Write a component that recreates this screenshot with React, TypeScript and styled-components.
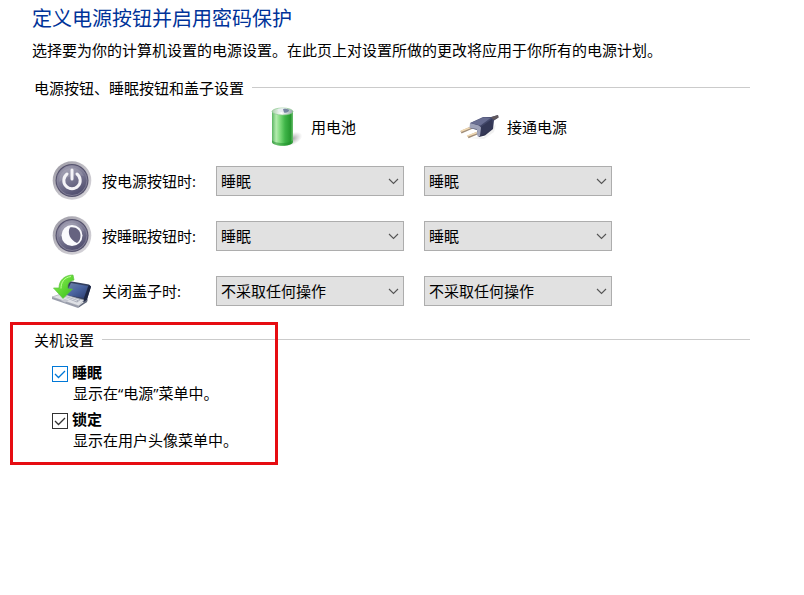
import React, { useState } from 'react';
import styled, { createGlobalStyle } from 'styled-components';

const GlobalStyle = createGlobalStyle`
  *, *::before, *::after { box-sizing: border-box; }
  body {
    margin: 0;
    background: #fff;
    color: #000;
    font: 15px/20px "Open Sans", "Noto Sans CJK SC", sans-serif;
  }
  select, input { font: inherit; color: inherit; margin: 0; }
`;

const Page = styled.main`
  padding: 0 54px 40px 32px;
`;

const Title = styled.h1`
  margin: 0;
  font-size: 20px;
  line-height: 38px;
  font-weight: 400;
  color: #003399;
`;

const Intro = styled.p`
  margin: 2px 0 18px;
`;

const Section = styled.section`
  position: relative;
  margin-bottom: 19px;
  padding-left: 2px;
`;

const SectionTitle = styled.h2`
  display: flex;
  align-items: center;
  gap: 8px;
  margin: 0;
  font-size: 15px;
  line-height: 20px;
  font-weight: 400;

  &::after {
    content: '';
    flex: 1;
    height: 1px;
    margin-bottom: 2px;
    background: #cbcbcb;
  }
`;

const Settings = styled.div`
  display: grid;
  grid-template-columns: 144px repeat(2, minmax(0, 188px));
  column-gap: 20px;
  row-gap: 15px;
  align-items: center;
  margin: 10px 0 0 18px;
`;

const SourceHeading = styled.div<{ $column: number; $indent: number }>`
  grid-column-start: ${(p) => p.$column};
  display: flex;
  align-items: center;
  gap: 7px;
  height: 38px;
  padding-left: ${(p) => p.$indent}px;
  white-space: nowrap;
`;

const RowLabel = styled.div`
  display: flex;
  align-items: center;
  gap: 10px;
  height: 40px;
  white-space: nowrap;
`;

const Icon = styled.svg`
  flex: none;
  width: 40px;
  height: 40px;
`;

const SelectBox = styled.div`
  position: relative;
`;

const Select = styled.select`
  display: block;
  appearance: none;
  width: 100%;
  height: 30px;
  padding: 0 28px 0 4px;
  border: 1px solid #adadad;
  border-radius: 0;
  background: #e1e1e1;
`;

const Chevron = styled.svg`
  position: absolute;
  top: 12px;
  right: 5px;
  width: 11px;
  height: 7px;
  pointer-events: none;
`;

const Options = styled.div`
  display: grid;
  row-gap: 6px;
  margin: 12px 0 0 18px;
`;

const Option = styled.div`
  display: grid;
  grid-template-columns: 16px 1fr;
  column-gap: 4px;
  row-gap: 1px;
`;

const CheckMark = styled.span`
  display: grid;
  align-self: end;
  width: 16px;
  height: 16px;

  > * { grid-area: 1 / 1; }
  svg { pointer-events: none; }
`;

const CheckInput = styled.input<{ $active: boolean }>`
  appearance: none;
  width: 16px;
  height: 16px;
  border: 1px solid ${(p) => (p.$active ? '#0078d7' : '#333')};
  background: #fff;

  & + svg { color: ${(p) => (p.$active ? '#0078d7' : '#333')}; }
  &:not(:checked) + svg { visibility: hidden; }
`;

const OptionName = styled.label`
  font-weight: 700;
`;

const OptionHint = styled.p`
  grid-column: 2;
  margin: 0 0 0 1px;
`;

const Highlight = styled.div`
  position: absolute;
  top: -8px;
  left: -22px;
  width: 268px;
  height: 143px;
  border: 3px solid #e60c12;
  pointer-events: none;
`;

function BatteryIcon() {
  return (
    <Icon viewBox="0 0 40 40" aria-hidden="true">
      <defs>
        <linearGradient id="cell" x1="0" x2="1">
          <stop offset="0" stopColor="#5cb563" />
          <stop offset=".2" stopColor="#b4ecae" />
          <stop offset=".42" stopColor="#74d673" />
          <stop offset=".62" stopColor="#3fb548" />
          <stop offset=".88" stopColor="#26982f" />
          <stop offset="1" stopColor="#6cc070" />
        </linearGradient>
        <linearGradient id="cap" x1="0" x2="1">
          <stop offset="0" stopColor="#a9cfab" />
          <stop offset=".45" stopColor="#fff" />
          <stop offset="1" stopColor="#92a4a8" />
        </linearGradient>
        <radialGradient id="cellShade">
          <stop offset="0" stopColor="#777" stopOpacity=".7" />
          <stop offset="1" stopColor="#999" stopOpacity="0" />
        </radialGradient>
      </defs>
      <ellipse cx="28" cy="32" rx="11" ry="6" fill="url(#cellShade)" transform="rotate(-25 28 32)" />
      <path d="M8 4v31c1 5 20 5 21 0V4z" fill="url(#cell)" />
      <path d="M8 33c2 4 19 4 21 0v2c-1 5-20 5-21 0z" fill="#1f8e2b" opacity=".5" />
      <ellipse cx="18.500" cy="4.500" rx="10.500" ry="3.500" fill="url(#cap)" stroke="#8fca92" strokeWidth=".7" />
      <ellipse cx="19" cy="3.300" rx="5" ry="2" fill="#e9edf2" />
      <path d="M19 2.200c3-1 6 0 6 1.400s-3 2.600-5 1.900z" fill="#7586a0" />
    </Icon>
  );
}

function PlugIcon() {
  return (
    <Icon viewBox="0 0 40 40" aria-hidden="true">
      <defs>
        <linearGradient id="plug" x1="0" y1="0" x2=".5" y2="1">
          <stop offset="0" stopColor="#71769a" />
          <stop offset=".45" stopColor="#454a6c" />
          <stop offset="1" stopColor="#2b2e48" />
        </linearGradient>
      </defs>
      <path d="M8 31l16-1 12-13-2 8-10 7z" fill="#999" opacity=".15" />
      <path d="M13 20L1 25.300M20 25L8 30" stroke="#a08d78" strokeWidth="2.800" />
      <path d="M13 19.500L1 24.300M20 24.500L7 29.300" stroke="#f0d9b4" strokeWidth="1.600" />
      <path d="M10 16l13-6h8l7-2 .500 2.500-4.500 3-1 8.500-8 6.500-6 1.500-2-7-7-2z" fill="url(#plug)" />
      <path d="M10 16l9 2.500 2 2-1 8.500-2 1-1.500-4 1-1-1-3-7-1z" fill="#9da1b8" />
      <path d="M10.500 16l13-5.500 7 .5-10 7.500z" fill="#686d91" />
      <path d="M21 20l11-8 1 8-12 9z" fill="#343856" />
      <path d="M31 10.300l7-2.300.5 2.500-4.500 2.500z" fill="#62595d" />
    </Icon>
  );
}

function RoundButton({ id, children }: { id: string; children: React.ReactNode }) {
  return (
    <Icon viewBox="0 0 40 40" aria-hidden="true">
      <defs>
        <linearGradient id={`${id}Rim`} x1="0" y1="0" x2="1" y2="1">
          <stop offset="0" stopColor="#9896a1" />
          <stop offset=".5" stopColor="#c1bfc6" />
          <stop offset="1" stopColor="#dad8dd" />
        </linearGradient>
        <linearGradient id={`${id}Face`} x1=".2" y1="0" x2=".7" y2="1">
          <stop offset="0" stopColor="#a19fb2" />
          <stop offset=".5" stopColor="#777590" />
          <stop offset="1" stopColor="#4d4b6c" />
        </linearGradient>
      </defs>
      <circle cx="20" cy="19.500" r="19.300" fill={`url(#${id}Rim)`} />
      <circle cx="20" cy="19.500" r="16.500" fill="#57546f" />
      <circle cx="20" cy="19.500" r="15" fill={`url(#${id}Face)`} stroke="#8c899f" strokeWidth=".8" />
      <path d="M7 21a13 13 0 0 1 25-6c-8-2-17 0-25 6z" fill="#fff" opacity=".12" />
      {children}
    </Icon>
  );
}

function LaptopIcon() {
  return (
    <Icon viewBox="0 0 40 40" aria-hidden="true">
      <defs>
        <linearGradient id="screen" x1="0" y1="0" x2="1" y2="1">
          <stop offset="0" stopColor="#7486a6" />
          <stop offset=".5" stopColor="#4a64a0" />
          <stop offset="1" stopColor="#2a3c70" />
        </linearGradient>
        <linearGradient id="arrow" x1="0" y1="0" x2="1" y2="1">
          <stop offset="0" stopColor="#8df355" />
          <stop offset="1" stopColor="#37bd19" />
        </linearGradient>
      </defs>
      <path d="M9 25l8-15 20 3.500 2 2-5 16z" fill="#34405f" />
      <path d="M13 24l6-12 17 3-4 12z" fill="url(#screen)" />
      <path d="M37 14l2 1.500-5 16-3-2z" fill="#1c2543" />
      <path d="M0 26l9-3 23 6-5 6z" fill="#dfe1e6" stroke="#9c9fa9" strokeWidth=".6" />
      <path d="M0 26v2l26 9 1-2z" fill="#999dab" />
      <path d="M27 35l6-5 3-2-1 3-9 6z" fill="#626879" />
      <path d="M9 25l4-1.500 16 5-4 3z" fill="#a9adb9" />
      <path d="M11 25.500l14 4.500M13 24.500l14 4.500" stroke="#eef0f4" strokeWidth=".7" />
      <path d="M9 29.500l4-1.500 4 1.500-4 2z" fill="#c3c6cf" />
      <path d="M21 4C13 4 7 9 7 17H1.500L11 27.500 20.500 18H16c-1-5 1-8 6-9z" fill="url(#arrow)" stroke="#5cc340" strokeWidth=".7" />
      <path d="M19 5.500c-7 1-10 6-10 12" fill="none" stroke="#baff94" strokeWidth="1" />
    </Icon>
  );
}

const ACTIONS = ['不采取任何操作', '睡眠', '休眠', '关机'];

const ROWS = [
  {
    label: '按电源按钮时:',
    value: '睡眠',
    icon: (
      <RoundButton id="power">
        <path d="M15 13a8.200 8.200 0 1 0 10 0M20 9v9" fill="none" stroke="#f4f3f7" strokeWidth="3" strokeLinecap="round" />
      </RoundButton>
    ),
  },
  {
    label: '按睡眠按钮时:',
    value: '睡眠',
    icon: (
      <RoundButton id="sleep">
        <circle cx="20" cy="19.500" r="10.500" fill="#fafafd" />
        <path d="M18 11.500c6-1 10 2.500 10.500 7.500 0 4-1 6-3.500 8-7-3-10-10-7-15.500z" fill="#666380" />
      </RoundButton>
    ),
  },
  { label: '关闭盖子时:', value: '不采取任何操作', icon: <LaptopIcon /> },
];

function ActionSelect({ label, initial }: { label: string; initial: string }) {
  const [value, setValue] = useState(initial);
  return (
    <SelectBox>
      <Select aria-label={label} value={value} onChange={(e) => setValue(e.target.value)}>
        {ACTIONS.map((a) => (
          <option key={a}>{a}</option>
        ))}
      </Select>
      <Chevron viewBox="0 0 11 7" aria-hidden="true">
        <path d="M1 1l4.500 4.500L10 1" fill="none" stroke="#555" strokeWidth="1.100" />
      </Chevron>
    </SelectBox>
  );
}

function MenuOption({ id, name, hint, active = false }: { id: string; name: string; hint: string; active?: boolean }) {
  return (
    <Option>
      <CheckMark>
        <CheckInput id={id} type="checkbox" defaultChecked $active={active} aria-describedby={`${id}-hint`} />
        <svg width="16" height="16" viewBox="0 0 16 16" aria-hidden="true">
          <path d="M3 8l3.500 3.500L13 5" fill="none" stroke="currentColor" strokeWidth="1.300" />
        </svg>
      </CheckMark>
      <OptionName htmlFor={id}>{name}</OptionName>
      <OptionHint id={`${id}-hint`}>{hint}</OptionHint>
    </Option>
  );
}

export default function App() {
  return (
    <Page>
      <GlobalStyle />
      <Title>定义电源按钮并启用密码保护</Title>
      <Intro>选择要为你的计算机设置的电源设置。在此页上对设置所做的更改将应用于你所有的电源计划。</Intro>

      <Section>
        <SectionTitle>电源按钮、睡眠按钮和盖子设置</SectionTitle>
        <Settings>
          <SourceHeading $column={2} $indent={48}>
            <BatteryIcon />
            用电池
          </SourceHeading>
          <SourceHeading $column={3} $indent={36}>
            <PlugIcon />
            接通电源
          </SourceHeading>
          {ROWS.map((row) => (
            <React.Fragment key={row.label}>
              <RowLabel>
                {row.icon}
                {row.label}
              </RowLabel>
              <ActionSelect label={`${row.label} 用电池`} initial={row.value} />
              <ActionSelect label={`${row.label} 接通电源`} initial={row.value} />
            </React.Fragment>
          ))}
        </Settings>
      </Section>

      <Section>
        <SectionTitle>关机设置</SectionTitle>
        <Options>
          <MenuOption id="show-sleep" name="睡眠" hint="显示在“电源”菜单中。" active />
          <MenuOption id="show-lock" name="锁定" hint="显示在用户头像菜单中。" />
        </Options>
        <Highlight />
      </Section>
    </Page>
  );
}
